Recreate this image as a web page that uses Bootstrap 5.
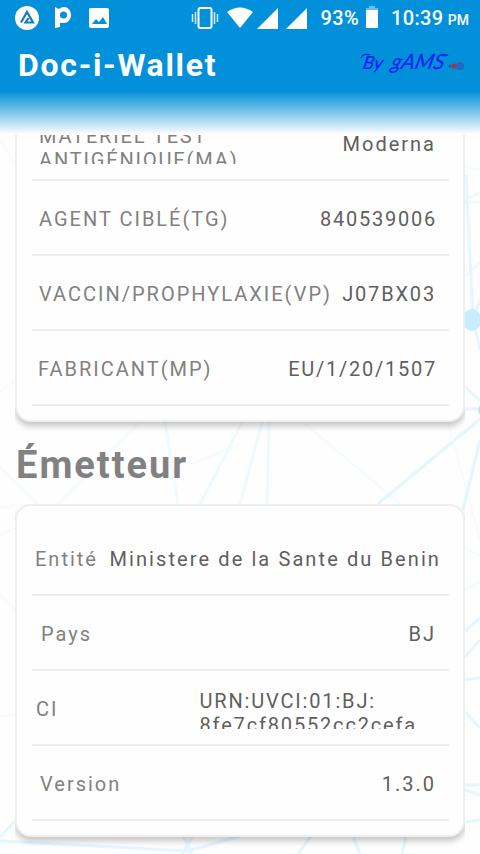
<!DOCTYPE html>
<html lang="fr">
<head>
<meta charset="utf-8">
<meta name="viewport" content="width=device-width, initial-scale=1">
<title>Doc-i-Wallet</title>
<link href="https://cdn.jsdelivr.net/npm/bootstrap@5.3.0/dist/css/bootstrap.min.css" rel="stylesheet">
<style>
body{font-family:Roboto,sans-serif;background:#fefefe}
.screen{width:480px;height:854px}
.top-area{height:135px;background:linear-gradient(#0390da 0,#0390da 91px,#a9d9f1 120px,#fefefe 134px)}
.status{height:36px;font-size:20px;font-weight:500;padding:0 11px 0 14px}
.status svg{display:block;flex:none;overflow:visible}
.clock{letter-spacing:.35px}
.charge{letter-spacing:.3px}
.pm{font-size:14px;margin-left:-1px;letter-spacing:0}
.brand{font-size:32px;font-weight:700;letter-spacing:1.7px;line-height:38px;padding-left:18px}
.title-row{height:58px}
.backdrop{inset:0;z-index:0}
.scroll-area{height:719px}
.panel{width:450px;border:2px solid #eee;border-radius:16px;margin-left:15px;background:#fefefe;padding:0 14px 0 15px;box-shadow:0 4px 6px rgba(0,0,0,.23);clip-path:inset(0 0 -16px 0)}
.panel-first{margin-top:-31px;height:318px}
.panel-second{height:333px;padding-top:15px}
.field{height:75px;border-bottom:2px solid #eee;font-size:20px;line-height:24px;letter-spacing:2px;color:#818181;padding:26px 12px 0 7px;white-space:nowrap}
.field dd{color:#5f5f5f}
.two-line{height:40px;margin-top:-8px!important;overflow:hidden}
.label-two{line-height:23.5px;height:39px;margin-top:-7px!important;letter-spacing:1.85px}
.section-title{font-size:38px;font-weight:700;letter-spacing:2px;color:#818181;line-height:44px;height:82px;padding:21px 0 0 16px}
.in-0{padding-left:3px}.in-1{padding-left:4px}.in-5{padding-left:9px}.in-4{padding-left:8px}.in-6{padding-left:6px}
.out-8{padding-right:8px}.out-code{padding-right:32px}.out-14{padding-right:13px}
.tight{letter-spacing:1.75px}.wide{letter-spacing:2.1px}.code{letter-spacing:1.83px}
</style>
<script src="https://cdn.jsdelivr.net/npm/bootstrap@5.3.0/dist/js/bootstrap.bundle.min.js"></script>
</head>
<body>
<div class="screen position-relative overflow-hidden">
<svg class="backdrop position-absolute" width="480" height="854" fill="none" aria-hidden="true">
<g stroke="#f5fbfe" stroke-width="2"><path d="M0 140L16 165M0 392L15 380M0 467L38 504M0 508L15 505M0 535L15 528M58 504L140 422M190 465L238 445M303 422L400 504M448 422L480 540M465 166L480 170M465 548L480 556M465 590L480 582M0 594L16 611M0 716L15 715"/></g>
<g stroke="#f0f9fe" stroke-width="3"><path d="M165 422L178 504M245 417L200 504M262 422L240 504M269 422L267 504M465 200L480 192M465 202H480M465 276L480 262"/></g>
<g stroke="#e5f6ff" stroke-width="3"><path d="M466 175L473 320L480 300M473 320L480 350M465 387L480 400M465 409H480M480 419L378 504M480 440L463 510M465 631L480 618M465 657L480 640M465 680L480 678M465 712L480 728M465 785H480M465 790L480 795M465 822L480 820M0 837L16 820M0 841L188 851L240 836M183 836L192 854M193 836L182 854M311 836L298 854M353 836L360 854M406 836L402 854"/></g>
<ellipse cx="472" cy="320" rx="9" ry="11" fill="#c9ecff"/><circle cx="484" cy="410" r="6" fill="#bfe2fa"/>
</svg>
<header class="top-area position-relative">
<div class="status d-flex align-items-center text-white">
<svg width="26" height="36"><circle cx="13" cy="18" r="12" fill="#fff"/><path d="M7 22.500L13 12L19 22.500H11.500L14.500 18" stroke="#167db5" stroke-width="2.200" fill="none"/></svg>
<svg width="18" height="36" class="ms-3"><path d="M0 7L4 9Q6 7 9 7A7 8 0 0 1 9 23H5V27L0 28Z" transform="translate(-1)" fill="#fff"/><circle cx="7.500" cy="15" r="3.500" fill="#0390da"/></svg>
<svg width="20" height="36" class="ms-3"><rect x="-1" y="8" width="20" height="20" rx="2" fill="#fff"/><path d="M2 24L6 19L9 22L13 17L17 24Z" fill="#0390da"/></svg>
<svg width="28" height="36" class="ms-auto"><rect x="7.500" y="8" width="13" height="20" rx="2" fill="none" stroke="#fff" stroke-width="2"/><path d="M4.500 12V24M23.500 12V24M1.500 14V22M26.500 14V22" stroke="#d0eaf8" stroke-width="1.500"/></svg>
<svg width="26" height="36" class="ms-2"><path d="M0 12Q13 3 26 12L13 28Z" fill="#fff"/></svg>
<svg width="22" height="36" class="ms-1"><path d="M0 29L21 8V29Z" fill="#fff"/></svg>
<svg width="22" height="36" class="ms-2"><path d="M-1 29L20 8V29Z" fill="#fff"/></svg>
<span class="charge ms-2 ps-1">93%</span>
<svg width="12" height="36" class="ms-2"><path d="M2 6H8V8H11V10H-1V8H2Z" fill="#68bce9"/><path d="M-1 10H11V28H-1Z" fill="#fff"/></svg>
<span class="clock ms-2 ps-1">10:39 <span class="pm">PM</span></span>
</div>
<div class="title-row d-flex align-items-center justify-content-between">
<h1 class="brand text-white m-0">Doc-i-Wallet</h1>
<svg width="122" height="48" role="img" aria-label="By gAMS">
<g font-family="Lato,sans-serif" font-style="italic" fill="#0824ef" stroke="#0824ef" stroke-width=".2"><text transform="translate(4 28) skewX(-12)" font-size="18" textLength="20" lengthAdjust="spacingAndGlyphs">By</text><text transform="translate(32 28) skewX(-14)" font-size="21" textLength="53" lengthAdjust="spacingAndGlyphs">gAMS</text></g>
<path d="M3 17Q5 12 12 14M84 15Q88 12 90 15" fill="none" stroke="#0824ef" stroke-width="1.300"/>
<circle cx="92" cy="25" r="1.500" fill="#275c9d"/><circle cx="96" cy="25" r="2.500" fill="#a93639"/><circle cx="102" cy="25" r="3.500" fill="#166ddd" stroke="#385d88"/>
</svg>
</div>
</header>
<main class="scroll-area position-relative overflow-hidden">
<section class="panel panel-first">
<dl class="field d-flex justify-content-between m-0 out-14"><dt class="fw-normal two-line label-two">MATERIEL TEST<br>ANTIGÉNIQUE(MA)</dt><dd class="m-0">Moderna</dd></dl>
<dl class="field d-flex justify-content-between m-0"><dt class="fw-normal">AGENT CIBLÉ(TG)</dt><dd class="m-0 tight">840539006</dd></dl>
<dl class="field d-flex justify-content-between m-0 out-14"><dt class="fw-normal">VACCIN/PROPHYLAXIE(VP)</dt><dd class="m-0 code">J07BX03</dd></dl>
<dl class="field in-6 d-flex justify-content-between m-0"><dt class="fw-normal">FABRICANT(MP)</dt><dd class="m-0 tight">EU/1/20/1507</dd></dl>
</section>
<h2 class="section-title m-0">Émetteur</h2>
<section class="panel panel-second">
<dl class="field in-0 out-8 d-flex justify-content-between m-0"><dt class="fw-normal">Entité</dt><dd class="m-0 wide">Ministere de la Sante du Benin</dd></dl>
<dl class="field in-5 out-14 d-flex justify-content-between m-0"><dt class="fw-normal">Pays</dt><dd class="m-0">BJ</dd></dl>
<dl class="field in-1 out-code d-flex justify-content-between m-0"><dt class="fw-normal">CI</dt><dd class="m-0 two-line code">URN:UVCI:01:BJ:<br>8fe7cf80552cc2cefa</dd></dl>
<dl class="field in-4 out-14 d-flex justify-content-between m-0"><dt class="fw-normal">Version</dt><dd class="m-0">1.3.0</dd></dl>
</section>
</main>
</div>
</body>
</html>
